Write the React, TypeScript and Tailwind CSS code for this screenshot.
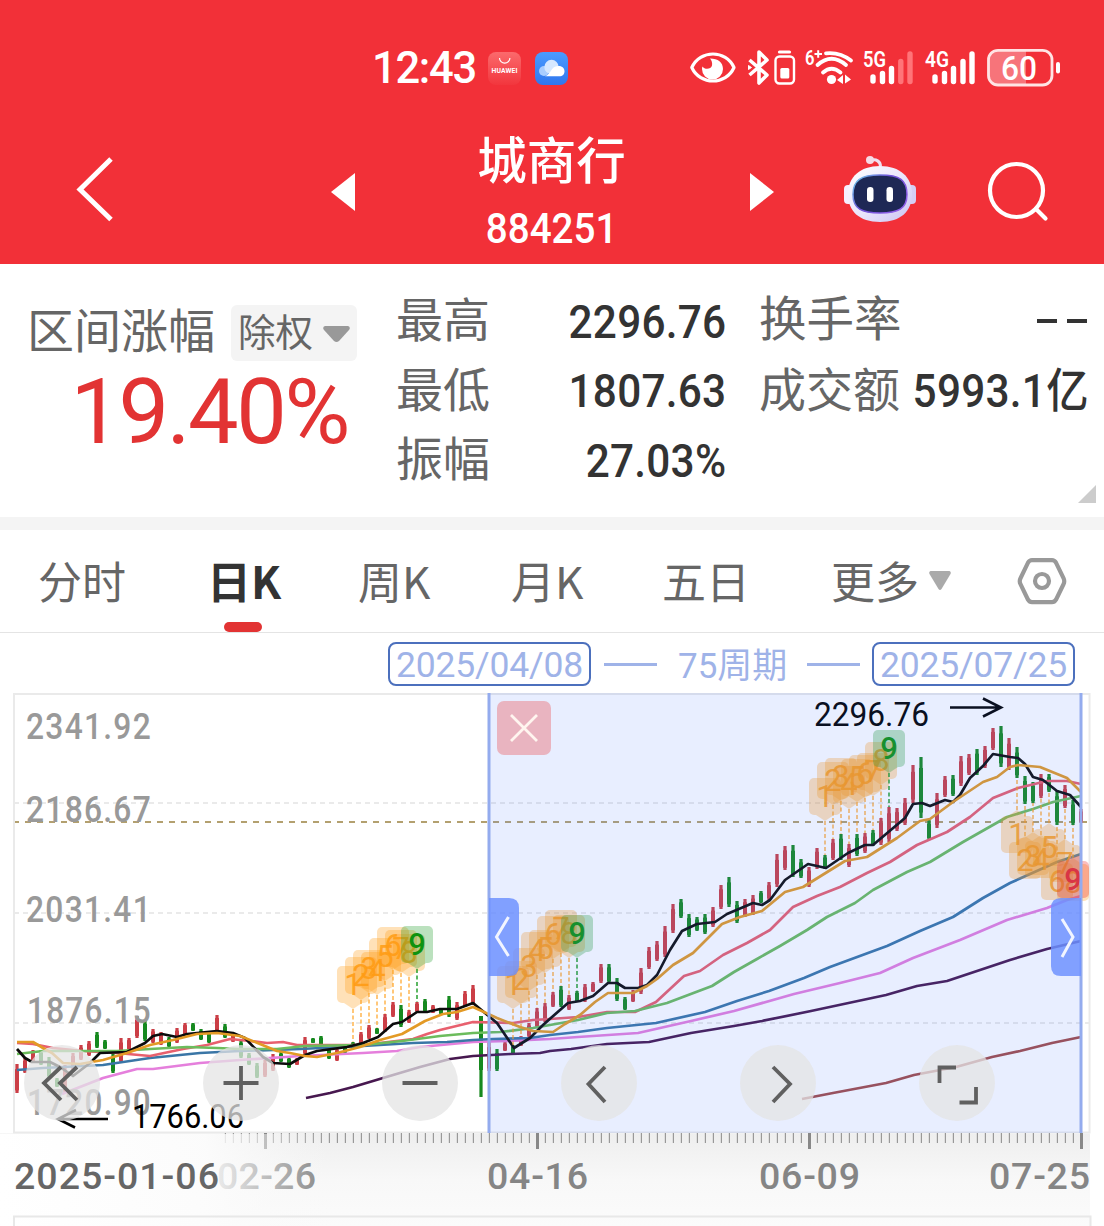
import React from 'react'

const HAN = "font-['Roboto','Noto_Sans_CJK_SC',sans-serif]"

// [high y, low y, direction] for each session, 8px apart starting at x = 17
const candles: [number, number, 'r' | 'g'][] = [
  [1064, 1093, 'r'], [1058, 1073, 'r'], [1050, 1062, 'r'], [1050, 1065, 'g'], [1057, 1078, 'g'], [1078, 1087, 'g'],
  [1065, 1093, 'r'], [1053, 1070, 'r'], [1045, 1060, 'r'], [1041, 1056, 'r'], [1032, 1048, 'g'], [1040, 1049, 'g'],
  [1053, 1073, 'g'], [1038, 1063, 'r'], [1038, 1050, 'r'], [1016, 1038, 'r'], [1020, 1041, 'g'], [1029, 1043, 'r'],
  [1032, 1045, 'r'], [1037, 1047, 'g'], [1028, 1043, 'r'], [1023, 1035, 'r'], [1023, 1031, 'g'], [1029, 1040, 'g'],
  [1032, 1043, 'g'], [1015, 1032, 'r'], [1024, 1038, 'g'], [1033, 1042, 'r'], [1040, 1058, 'g'], [1053, 1065, 'g'],
  [1063, 1078, 'g'], [1060, 1077, 'r'], [1054, 1071, 'r'], [1052, 1062, 'g'], [1057, 1068, 'g'], [1058, 1065, 'r'],
  [1037, 1055, 'r'], [1038, 1043, 'g'], [1036, 1045, 'g'], [1047, 1059, 'g'], [1048, 1061, 'r'], [1046, 1053, 'g'],
  [1042, 1049, 'g'], [1032, 1045, 'r'], [1025, 1039, 'r'], [1028, 1034, 'g'], [1014, 1032, 'r'], [1002, 1017, 'r'],
  [1005, 1027, 'g'], [1010, 1023, 'r'], [1002, 1012, 'r'], [999, 1012, 'g'], [1005, 1013, 'r'], [1008, 1014, 'g'],
  [996, 1017, 'g'], [1002, 1020, 'r'], [991, 1007, 'r'], [985, 1005, 'r'], [1016, 1097, 'g'], [1042, 1071, 'r'],
  [1049, 1071, 'g'], [1042, 1051, 'r'], [1045, 1055, 'g'], [1036, 1046, 'r'], [1023, 1037, 'r'], [1008, 1028, 'r'],
  [1003, 1022, 'r'], [992, 1007, 'r'], [986, 1007, 'g'], [995, 1010, 'r'], [991, 1002, 'g'], [984, 1002, 'r'],
  [982, 992, 'r'], [964, 983, 'r'], [964, 983, 'g'], [978, 1001, 'g'], [997, 1010, 'g'], [990, 1002, 'r'],
  [968, 994, 'r'], [947, 969, 'r'], [941, 961, 'r'], [926, 957, 'r'], [904, 933, 'r'], [899, 918, 'g'],
  [914, 937, 'g'], [917, 931, 'g'], [914, 934, 'g'], [907, 927, 'r'], [885, 909, 'r'], [877, 907, 'g'],
  [901, 923, 'g'], [899, 917, 'r'], [895, 915, 'r'], [891, 903, 'g'], [882, 900, 'r'], [854, 887, 'r'],
  [846, 870, 'r'], [845, 877, 'g'], [859, 878, 'g'], [867, 887, 'r'], [848, 869, 'r'], [855, 869, 'g'],
  [839, 860, 'r'], [834, 860, 'g'], [844, 867, 'r'], [834, 856, 'g'], [833, 853, 'r'], [830, 846, 'g'],
  [818, 845, 'r'], [807, 842, 'r'], [808, 831, 'r'], [798, 825, 'r'], [765, 803, 'r'], [757, 818, 'g'],
  [820, 840, 'g'], [793, 828, 'r'], [776, 797, 'r'], [775, 796, 'g'], [756, 786, 'r'], [754, 775, 'r'],
  [749, 775, 'g'], [746, 768, 'r'], [728, 750, 'r'], [726, 767, 'g'], [738, 770, 'r'], [747, 778, 'g'],
  [776, 804, 'g'], [782, 803, 'g'], [774, 798, 'r'], [774, 792, 'g'], [790, 825, 'g'], [785, 808, 'r'],
  [800, 825, 'g'], [809, 823, 'r'],
]

const averages = [
  {
    color: '#a34b48',
    points: '802,1099 833,1093 886,1083 914,1075 956,1067 992,1057 1020,1051 1052,1043 1081,1037',
  },
  {
    color: '#47184f',
    points:
      '306,1098 330,1093 353,1087 383,1078 420,1067 450,1059 473,1056 510,1054 540,1053 550,1051 571,1049 607,1044 649,1042 691,1033 734,1026 762,1021 811,1011 886,995 917,986 947,981 1010,960 1047,949 1081,941',
  },
  {
    color: '#e57fdc',
    points:
      '62,1094 103,1078 137,1069 153,1069 200,1063 240,1060 300,1056 363,1053 397,1051 420,1047 473,1042 507,1041 550,1039 578,1037 638,1033 691,1021 734,1011 794,994 840,983 880,973 913,958 960,940 1007,920 1047,908 1067,900 1081,896',
  },
  {
    color: '#3a76a6',
    points:
      '17,1070 43,1068 103,1065 150,1058 200,1053 240,1051 300,1049 363,1046 413,1043 447,1042 473,1040 493,1039 530,1038 550,1035 578,1032 607,1028 656,1023 705,1012 737,1001 769,991 804,978 830,967 887,946 920,931 953,917 983,898 1010,883 1057,862 1081,854',
  },
  {
    color: '#e8606e',
    points:
      '17,1043 33,1044 53,1048 83,1051 117,1053 150,1056 183,1049 207,1045 230,1039 250,1041 267,1043 283,1042 297,1045 363,1045 413,1039 427,1034 440,1030 473,1022 513,1023 533,1020 550,1019 578,1017 607,1012 635,1012 656,1002 684,976 700,971 723,955 747,943 770,930 793,907 817,896 840,887 867,873 890,862 917,845 947,832 970,817 993,798 1018,788 1047,781 1067,781 1081,784',
  },
  {
    color: '#6cbc5c',
    points:
      '17,1054 43,1051 117,1051 150,1049 187,1047 217,1048 240,1049 277,1049 305,1046 363,1045 402,1041 440,1036 473,1033 500,1032 533,1028 550,1025 578,1020 607,1013 635,1011 667,1003 712,986 734,972 757,959 780,946 807,930 827,917 855,903 873,890 907,872 930,862 963,842 1007,817 1033,809 1053,802 1081,796',
  },
  {
    color: '#0c0c0c',
    points:
      '17,1049 25,1058 32,1062 50,1062 60,1067 73,1076 90,1063 100,1053 127,1052 137,1047 145,1043 153,1036 162,1034 177,1037 187,1034 207,1032 217,1031 233,1033 245,1038 263,1057 273,1063 290,1064 305,1055 317,1051 347,1047 363,1043 378,1037 393,1024 402,1022 417,1012 427,1012 440,1009 457,1009 473,1003 497,1023 514,1048 530,1038 543,1025 552,1017 568,1003 580,1001 593,996 608,983 617,983 625,988 638,988 647,985 657,975 670,950 682,931 697,924 715,922 727,914 753,903 762,905 770,900 785,880 808,864 826,868 848,853 865,845 873,845 905,818 913,804 922,803 930,806 945,800 953,802 960,795 970,778 983,766 993,754 1010,757 1018,758 1025,764 1033,777 1043,780 1057,791 1070,795 1081,807',
  },
  {
    color: '#e39a25',
    points:
      '17,1042 33,1042 43,1048 52,1053 63,1063 80,1064 103,1060 127,1053 150,1045 173,1040 197,1034 217,1033 240,1036 260,1044 277,1051 290,1053 305,1056 317,1057 337,1053 360,1047 380,1040 402,1034 425,1021 443,1014 457,1012 473,1007 497,1018 520,1027 533,1031 553,1032 565,1024 580,1015 595,1002 608,993 633,993 647,986 657,979 673,965 693,953 722,924 740,917 762,911 785,892 803,887 845,861 867,857 897,838 920,821 930,819 953,802 983,782 997,777 1010,767 1018,765 1040,767 1067,778 1081,792',
  },
]

// Nine-count flags, `tips` are the pointer ends from 1 to 9
const flagGroups = [
  { start: 42, up: false, last: '#1f9d27', tips: [1009, 1000, 993, 995, 981, 970, 973, 977, 969] },
  { start: 62, up: false, last: '#1f9d27', tips: [1009, 1004, 991, 975, 973, 959, 953, 958, 958] },
  { start: 101, up: false, last: '#1f9d27', tips: [821, 805, 801, 809, 802, 798, 796, 785, 773] },
  { start: 125, up: true, last: '#f02323', tips: [810, 836, 832, 835, 823, 857, 839, 858, 855] },
]

const barX = (i: number) => 17 + i * 8

function Flags({ start, up, last, tips }: (typeof flagGroups)[number]) {
  return (
    <g>
      {tips.map((tip, n) => {
        const bar = barX(start + n)
        // keep the box inside the right border
        const x = Math.min(bar, 1073)
        const color = n === 8 ? last : '#ff9d14'
        const [high, low] = candles[start + n]
        const d = up ? 1 : -1
        const top = up ? tip + 6 : tip - 43
        const base = tip + d * 6
        return (
          <g key={n}>
            <line x1={bar} x2={bar} y1={tip} y2={up ? low : high} stroke={color} strokeWidth="1.6" strokeDasharray="4 2.5" opacity={n === 8 ? 0.9 : 0.7} />
            <rect x={x - 16} y={top} width="32" height="37" rx="5" fill={color} opacity="0.3" />
            <path d={`M${x - 9} ${base}L${bar} ${tip}L${x + 9} ${base}z`} fill={color} opacity="0.3" />
            <text x={x} y={top + 29} textAnchor="middle" fontSize="31" fontWeight={n === 8 ? 500 : 400} fill={n === 8 ? (up ? '#ee2b2b' : '#0f930f') : '#ff9d14'} opacity={n === 8 ? 1 : 0.85}>
              {n + 1}
            </text>
          </g>
        )
      })}
    </g>
  )
}

function StatusBar() {
  return (
    <div className="flex h-[136px] items-center pl-[372px]">
      <span className="w-[116px] pt-0.5 text-[43.5px] font-medium leading-none tracking-[-1.3px]">12:43</span>
      <svg className="h-[34px] w-[34px]" viewBox="0 0 34 34">
        <defs>
          <linearGradient id="hw" x1="0" y1="0" x2="0" y2="1">
            <stop offset="0" stopColor="#fb6a6c" />
            <stop offset="1" stopColor="#f2363d" />
          </linearGradient>
        </defs>
        <rect y="1" width="33" height="33" rx="8" fill="url(#hw)" />
        <path d="M11.5 7a5.2 5.2 0 0 0 10.4 0" fill="none" stroke="#fff" strokeWidth="1.2" />
        <text x="16.5" y="22" textAnchor="middle" fontSize="6.8" fontWeight="700" textLength="26" fill="#fff">HUAWEI</text>
      </svg>
      <svg className="ml-[13px] h-[34px] w-[34px]" viewBox="0 0 34 34">
        <defs>
          <linearGradient id="cl" x1="0" y1="0" x2="0" y2="1">
            <stop offset="0" stopColor="#4b9bff" />
            <stop offset="1" stopColor="#2f76ee" />
          </linearGradient>
        </defs>
        <rect y="1" width="33" height="33" rx="8" fill="url(#cl)" />
        <circle cx="9" cy="20" r="5" fill="#a9cdff" />
        <circle cx="16.5" cy="16" r="7.2" fill="#d6e8ff" />
        <path d="M10 25.200c3-1 5-4 7-7 3.500-5 12.500-4 12.500 2 0 3-2 5-5 5z" fill="#fff" />
      </svg>
      <svg className="ml-[121px] h-[40px] w-[372px]" viewBox="690 48 372 40" fill="none" stroke="#fff">
        <path d="M691.800 67.500C700 49.500 726 49.500 734 67.500C726 85.500 700 85.500 691.800 67.500z" strokeWidth="3.2" strokeLinejoin="round" />
        <path d="M710 58.500c8 0 13 4 13 10.500a10.500 10.500 0 0 1-21 0c0-1 .2-2 .5-2.600 2 3.500 8.500 3.200 9.500-.9.500-2.500-.3-5-2-7z" fill="#fff" stroke="none" />
        <path d="M749.500 60l17.500 15-8 8V52l8 8-17.500 15" strokeWidth="3.6" strokeLinejoin="round" />
        <path d="M748.500 65.500l3 2-3 2z" fill="#fff" strokeWidth="1" />
        <rect x="775.5" y="56.5" width="18.5" height="27" rx="4" strokeWidth="2.4" />
        <path d="M779.500 52h10" strokeWidth="3.2" strokeLinecap="round" />
        <rect x="780.3" y="68" width="9" height="10.5" rx="1.5" fill="#fff" stroke="none" />
        <text x="805" y="65" fontSize="20" fontWeight="600" fill="#fff" stroke="none" textLength="9.5" lengthAdjust="spacingAndGlyphs">6</text>
        <path d="M814.500 54h7.500M818.200 50.300v7.400" strokeWidth="2" />
        <path d="M826 53.300q14-1.500 25 7.300M817.500 65q14-12.500 28.500 0M823 72.500q8.500-7.500 17.500 0" strokeWidth="3.8" strokeLinecap="round" />
        <circle cx="831.5" cy="79.5" r="4.6" fill="#fff" stroke="none" />
        <path d="M837 80l6-5v9zM851 79.500l-6-5v9z" fill="#fff" stroke="none" />
        <text x="863" y="66.5" fontSize="22" fontWeight="600" fill="#fff" stroke="none" textLength="23" lengthAdjust="spacingAndGlyphs">5G</text>
        <g strokeWidth="5.4" strokeLinecap="round">
          <path d="M873 77v4M882.500 73.500v8M891.500 68.500v13" />
          <path d="M900.800 61.500v20M910 54v27.500" stroke="#ff7478" />
          <path d="M935 77v4M944.500 73.500v8M953.500 68.500v13M963 61.500v20M972 54v27.500" />
        </g>
        <text x="925" y="66.5" fontSize="22" fontWeight="600" fill="#fff" stroke="none" textLength="24" lengthAdjust="spacingAndGlyphs">4G</text>
        <path d="M998 50.500h28v34.500h-28q-9.500 0-9.500-9v-17q0-8.500 9.500-8.500z" fill="#f7747a" stroke="none" />
        <rect x="988.5" y="50.3" width="63.5" height="34.7" rx="9.5" strokeWidth="2.8" stroke="#ffe4e4" />
        <rect x="1056" y="62" width="4" height="11.5" rx="2" fill="#fff" stroke="none" />
        <text x="1001" y="79.5" fontSize="33" fontWeight="500" fill="#fff" stroke="none" textLength="36" lengthAdjust="spacingAndGlyphs">60</text>
      </svg>
    </div>
  )
}

function TitleBar() {
  return (
    <div className="flex h-32 items-start">
      <svg className="ml-[74px] mt-[19px] h-[68px] w-[42px]" viewBox="74 155 42 68" fill="none" stroke="#fff" strokeWidth="5">
        <path d="M111 159L80 189.500L111 219.500" />
      </svg>
      <svg className="ml-[215px] mt-[37px] h-[38px] w-[25px]" viewBox="0 0 25 38">
        <path d="M24 0v38L0 19z" fill="#fff" />
      </svg>
      <div className="ml-[80px] flex w-[231px] flex-col items-center">
        <div className="h-[62px] text-[49.5px] font-medium leading-[53px]">城商行</div>
        <div className="h-[62px] scale-x-[.92] pt-[10px] text-[42px] font-medium leading-[42px]">884251</div>
      </div>
      <svg className="ml-[83px] mt-[37px] h-[38px] w-[25px]" viewBox="0 0 25 38">
        <path d="M0 0v38L24 19z" fill="#fff" />
      </svg>
      <svg className="ml-[67px] mt-[18px] h-[70px] w-[76px]" viewBox="842 154 76 70">
        <defs>
          <linearGradient id="head" x1="0" y1="0" x2="1" y2="1">
            <stop offset="0" stopColor="#ffffff" />
            <stop offset="0.55" stopColor="#e9e4fb" />
            <stop offset="1" stopColor="#c9c4f2" />
          </linearGradient>
          <linearGradient id="rim" x1="0" y1="0" x2="1" y2="0.6">
            <stop offset="0" stopColor="#6fd3ea" />
            <stop offset="0.5" stopColor="#6f52d8" />
            <stop offset="1" stopColor="#8e5ee8" />
          </linearGradient>
        </defs>
        <path d="M871 160.500c5-2 9.500 1 9.500 6" fill="none" stroke="#f0dff0" strokeWidth="3" />
        <circle cx="870" cy="160" r="4" fill="#f5dbe6" />
        <rect x="844" y="185" width="9" height="19" rx="4" fill="#f7efff" />
        <rect x="907" y="185" width="9" height="19" rx="4" fill="#d5cff5" />
        <path d="M880 166c20 0 32 11 32 28s-11 28-32 28-32-11-32-28 12-28 32-28z" fill="url(#head)" />
        <path d="M880 175c20 0 27 5 27 19.500s-9 18.500-27 18.500-27-4-27-18.500 8-19.500 27-19.500z" fill="#1e2855" stroke="url(#rim)" strokeWidth="1.5" />
        <rect x="867" y="187" width="6.5" height="15" rx="3.2" fill="#fff" />
        <rect x="886.5" y="187" width="6.5" height="15" rx="3.2" fill="#fff" />
      </svg>
      <svg className="ml-[67px] mt-[23px] h-[66px] w-[66px]" viewBox="985 159 66 66" fill="none" stroke="#fff" strokeWidth="4.2">
        <circle cx="1016.5" cy="190.5" r="26.5" />
        <path d="M1036 209l9.500 9.500" strokeLinecap="round" />
      </svg>
    </div>
  )
}

function Stat({ label, value }: { label: string; value: string }) {
  return (
    <div className="flex h-[69.5px] items-center justify-between whitespace-nowrap">
      <span className="text-[47px] leading-none text-[#666]">{label}</span>
      <span className="-ml-8 origin-right scale-x-[.9] pt-px text-[47px] font-medium leading-none tracking-[0.3px] text-[#333]">{value}</span>
    </div>
  )
}

function Stats() {
  return (
    <section className="relative flex h-[253px] bg-white">
      <div className="w-[396px]">
        <div className="mt-[41px] flex h-[56px] items-center pl-[27px]">
          <span className="w-[204px] whitespace-nowrap pb-[3px] text-[47px] leading-none text-[#666]">区间涨幅</span>
          <div className="flex h-[56px] w-[126px] items-center rounded-md bg-[#f4f4f4] pl-[7px] pt-0.5 text-[37.5px] leading-none text-[#666]">
            除权
            <svg className="ml-[10px] h-[18px] w-[28px]" viewBox="0 0 28 18">
              <path d="M2 1h23q3 1 1 4l-10 11q-2.500 2-5 0l-10-11q-2-3 1-4z" fill="#999" />
            </svg>
          </div>
        </div>
        <div className="mt-[10px] w-[348px] whitespace-nowrap text-right text-[90px] leading-[84px] tracking-[-2.4px] text-[#e23333]">19.40%</div>
      </div>
      <div className="w-[330px] pt-[22px]">
        <Stat label="最高" value="2296.76" />
        <Stat label="最低" value="1807.63" />
        <Stat label="振幅" value="27.03%" />
      </div>
      <div className="ml-[33px] w-[330px] pt-[22px]">
        <div className="flex h-[69.5px] items-center justify-between">
          <span className="text-[47.5px] leading-none text-[#666]">换手率</span>
          <span className="mr-0.5 flex gap-[10px]">
            <i className="h-1 w-5 bg-[#333]" />
            <i className="h-1 w-5 bg-[#333]" />
          </span>
        </div>
        <Stat label="成交额" value="5993.1亿" />
      </div>
      <svg className="absolute bottom-[14px] right-2 h-[18px] w-[18px]" viewBox="0 0 18 18">
        <path d="M18 0v18H0z" fill="#ccc" />
      </svg>
    </section>
  )
}

function Tabs() {
  return (
    <nav className="flex h-[103px] items-center whitespace-nowrap border-b border-[#e4e4e4] bg-white pb-[3px] font-['Noto_Sans_CJK_SC',sans-serif] text-[44px] leading-none text-[#666]">
      <span className="ml-[38px] w-[169px]">分时</span>
      <span className="relative flex h-full w-[151px] items-center font-bold text-[#333]">
        日K
        <i className="absolute -bottom-[3px] left-[17px] h-[10px] w-[38px] rounded-full bg-[#e23333]" />
      </span>
      <span className="w-[153px]">周K</span>
      <span className="w-[151px]">月K</span>
      <span className="w-[169px]">五日</span>
      <span className="w-[98px]">更多</span>
      <svg className="mt-[3px] h-[20px] w-[22px]" viewBox="0 0 22 20">
        <path d="M1.5 0h19q2 1 1 3l-9 15q-1.500 2-3 0L.5 3q-1-2 1-3z" fill="#aaa" />
      </svg>
      <svg className="ml-[66px] mt-[3px] h-[48px] w-[50px]" viewBox="1017 557 50 48" fill="none" stroke="#999" strokeWidth="4.2">
        <path d="M1032 560.200h20q2.500 0 4 2.500l7.500 15.500q1.500 3 0 6l-7.500 15.500q-1.500 2.500-4 2.500h-20q-2.500 0-4-2.500l-7.500-15.500q-1.500-3 0-6l7.500-15.500q1.500-2.500 4-2.500z" />
        <circle cx="1042" cy="581" r="7" />
      </svg>
    </nav>
  )
}

function RangeBar() {
  return (
    <div className="flex h-[60px] items-start bg-white pl-[388px] pt-[9px] text-[#9fb3e8]">
      <div className="flex h-[44px] w-[203px] items-center justify-center rounded-lg border-2 border-[#4c70bd] pt-[3px] text-[35.5px] leading-none tracking-[-0.2px]">2025/04/08</div>
      <i className="ml-[13px] mt-[21px] h-[3px] w-[53px] bg-[#9fb3e8]" />
      <span className="ml-[21px] w-[108px] whitespace-nowrap pt-1 text-[35px] leading-[42px]">75周期</span>
      <i className="ml-[21px] mt-[21px] h-[3px] w-[53px] bg-[#9fb3e8]" />
      <div className="ml-[12px] flex h-[44px] w-[203px] items-center justify-center rounded-lg border-2 border-[#4c70bd] pt-[3px] text-[35.5px] leading-none tracking-[-0.2px]">2025/07/25</div>
    </div>
  )
}

const priceLabels = [
  { y: 739, value: '2341.92', x: 26, w: 126 },
  { y: 822, value: '2186.67', x: 26, w: 126 },
  { y: 922, value: '2031.41', x: 26, w: 126 },
  { y: 1023, value: '1876.15', x: 27, w: 125 },
  { y: 1115, value: '1720.90', x: 27, w: 125 },
]

const ticks = Array.from({ length: 108 }, (_, i) => 225 + i * 8)

function Chart() {
  return (
    <svg className="block h-[533px] w-[1104px]" viewBox="0 693 1104 533" fontFamily="Roboto, 'Noto Sans CJK SC', sans-serif">
      <defs>
        <linearGradient id="axis" x1="0" y1="0" x2="0" y2="1">
          <stop offset="0" stopColor="#eeeeee" />
          <stop offset="0.5" stopColor="#f8f8f8" />
          <stop offset="1" stopColor="#fbfbfb" />
        </linearGradient>
        <linearGradient id="fade" x1="0" y1="0" x2="1" y2="0">
          <stop offset="0" stopColor="#fff" />
          <stop offset="0.62" stopColor="#fcfcfc" stopOpacity="0.95" />
          <stop offset="1" stopColor="#f8f8f8" stopOpacity="0" />
        </linearGradient>
      </defs>
      <rect x="0" y="693" width="1104" height="533" fill="#fff" />

      <g stroke="#e3e3e3" strokeWidth="1.6" strokeDasharray="5 4">
        <path d="M14 803H1090M14 913H1090M14 1023H1090" />
      </g>
      <path d="M13 822H1090" stroke="#b3a06f" strokeWidth="1.8" strokeDasharray="6 6" />
      <rect x="14" y="694" width="1075.5" height="438.5" fill="none" stroke="#eaeaea" strokeWidth="2" />

      {candles.map(([high, low, dir], i) => {
        const color = dir === 'r' ? '#cb3e46' : '#16891f'
        const x = barX(i)
        const wick = (low - high) * 0.18
        return (
          <g key={i} fill={color}>
            <rect x={x - 1.6} y={high} width="3.2" height={low - high} />
            {i === 58 ? <rect x={x - 2} y="1016" width="4" height="54" /> : <rect x={x - 2} y={high + wick} width="4" height={low - high - wick * 1.5} />}
          </g>
        )
      })}
      <g fill="none" strokeWidth="2.7" strokeLinejoin="round">
        {averages.map((line) => (
          <polyline key={line.color} points={line.points} stroke={line.color} />
        ))}
      </g>
      {flagGroups.map((group) => (
        <Flags key={group.start} {...group} />
      ))}

      <g fontSize="37.5" fontWeight="500" letterSpacing="1.5" fill="#999">
        {priceLabels.map((p) => (
          <text key={p.value} x={p.x} y={p.y} textLength={p.w} lengthAdjust="spacingAndGlyphs">{p.value}</text>
        ))}
      </g>

      <g fill="none" stroke="#000" strokeWidth="2.6">
        <path d="M108 1119H60M75 1127.500L58 1119L76 1110" />
        <path d="M950 707.500H1000M983 698.500L1001 707.500L983 716.500" />
      </g>
      <text x="132" y="1128" fontSize="33.5" textLength="112" lengthAdjust="spacingAndGlyphs">1766.06</text>
      <text x="814" y="726" fontSize="33.5" textLength="115" lengthAdjust="spacingAndGlyphs">2296.76</text>

      {/* selected interval */}
      <rect x="489" y="693" width="592" height="440" fill="#4e7cff" opacity="0.13" />
      <path d="M489 693V1133M1081 693V1133" stroke="#93abee" strokeWidth="3" />
      <rect x="497" y="701" width="54" height="54" rx="7" fill="#e9b4c0" />
      <path d="M511 715L537 741M537 715L511 741" stroke="#fff5ef" strokeWidth="2.8" />
      <path d="M489 898h20q10 0 10 10v58q0 10-10 10h-20z" fill="#6d90ff" opacity="0.84" />
      <path d="M1081 898h-20q-10 0-10 10v58q0 10 10 10h20z" fill="#6d90ff" opacity="0.84" />
      <path d="M508.500 917L496.500 937L508.500 956M1062 919L1073 937L1062 957" fill="none" stroke="#f2f5ff" strokeWidth="3" />

      {/* date axis */}
      <rect x="0" y="1133.5" width="1090" height="93" fill="url(#axis)" />
      {ticks.map((x) => {
        const major = (x - 265) % 272 === 0
        return (
          <rect key={x} x={major ? x - 1 : x - 0.2} y="1133" width={major ? 3 : 1.2} height={major ? 16 : 10} fill={major ? '#888' : '#999'} />
        )
      })}
      <g fontSize="37.5" fontWeight="500" fill="#858585">
        <text x="217" y="1189" textLength="99" lengthAdjust="spacing">02-26</text>
        <text x="487" y="1189" textLength="101" lengthAdjust="spacing">04-16</text>
        <text x="759" y="1189" textLength="101" lengthAdjust="spacing">06-09</text>
        <text x="989" y="1189" textLength="101" lengthAdjust="spacing">07-25</text>
      </g>
      <rect x="0" y="1134" width="330" height="92" fill="url(#fade)" />
      <text x="14" y="1189" fontSize="37.5" fontWeight="500" fill="#666" textLength="205">2025-01-06</text>
      <path d="M13 1216.500H1090.500V1226M14 1216V1226" fill="none" stroke="#e8e8e8" strokeWidth="2" />
    </svg>
  )
}

const controls = [
  { name: 'oldest', d: 'M37 22L20 38L37 55M53 22L36 38L53 55' },
  { name: 'zoom-in', d: 'M20.5 38H55.5M38 21V55' },
  { name: 'zoom-out', d: 'M20.5 38H55.5' },
  { name: 'prev', d: 'M44 22L27.5 39L44 57' },
  { name: 'next', d: 'M33 22L50 39L33 57' },
  { name: 'expand', d: 'M20.5 38V22.5H37M57 42V57.5H40.5' },
]

function Controls() {
  return (
    <div className="absolute left-6 top-[352px] flex gap-[103px]">
      {controls.map((c) => (
        <button key={c.name} aria-label={c.name} className="h-[76px] w-[76px] rounded-full bg-[#e4e4e4]/75">
          <svg viewBox="0 0 76 76" fill="none" stroke="#606060" strokeWidth="3.8">
            <path d={c.d} />
          </svg>
        </button>
      ))}
    </div>
  )
}

export default function App() {
  return (
    <main className={`h-[1226px] w-[1104px] overflow-hidden bg-white ${HAN}`}>
      <header className="h-[264px] bg-[#f23038] text-white">
        <StatusBar />
        <TitleBar />
      </header>
      <Stats />
      <div className="h-[13px] bg-[#f4f4f4]" />
      <Tabs />
      <RangeBar />
      <div className="relative">
        <Chart />
        <Controls />
      </div>
    </main>
  )
}
